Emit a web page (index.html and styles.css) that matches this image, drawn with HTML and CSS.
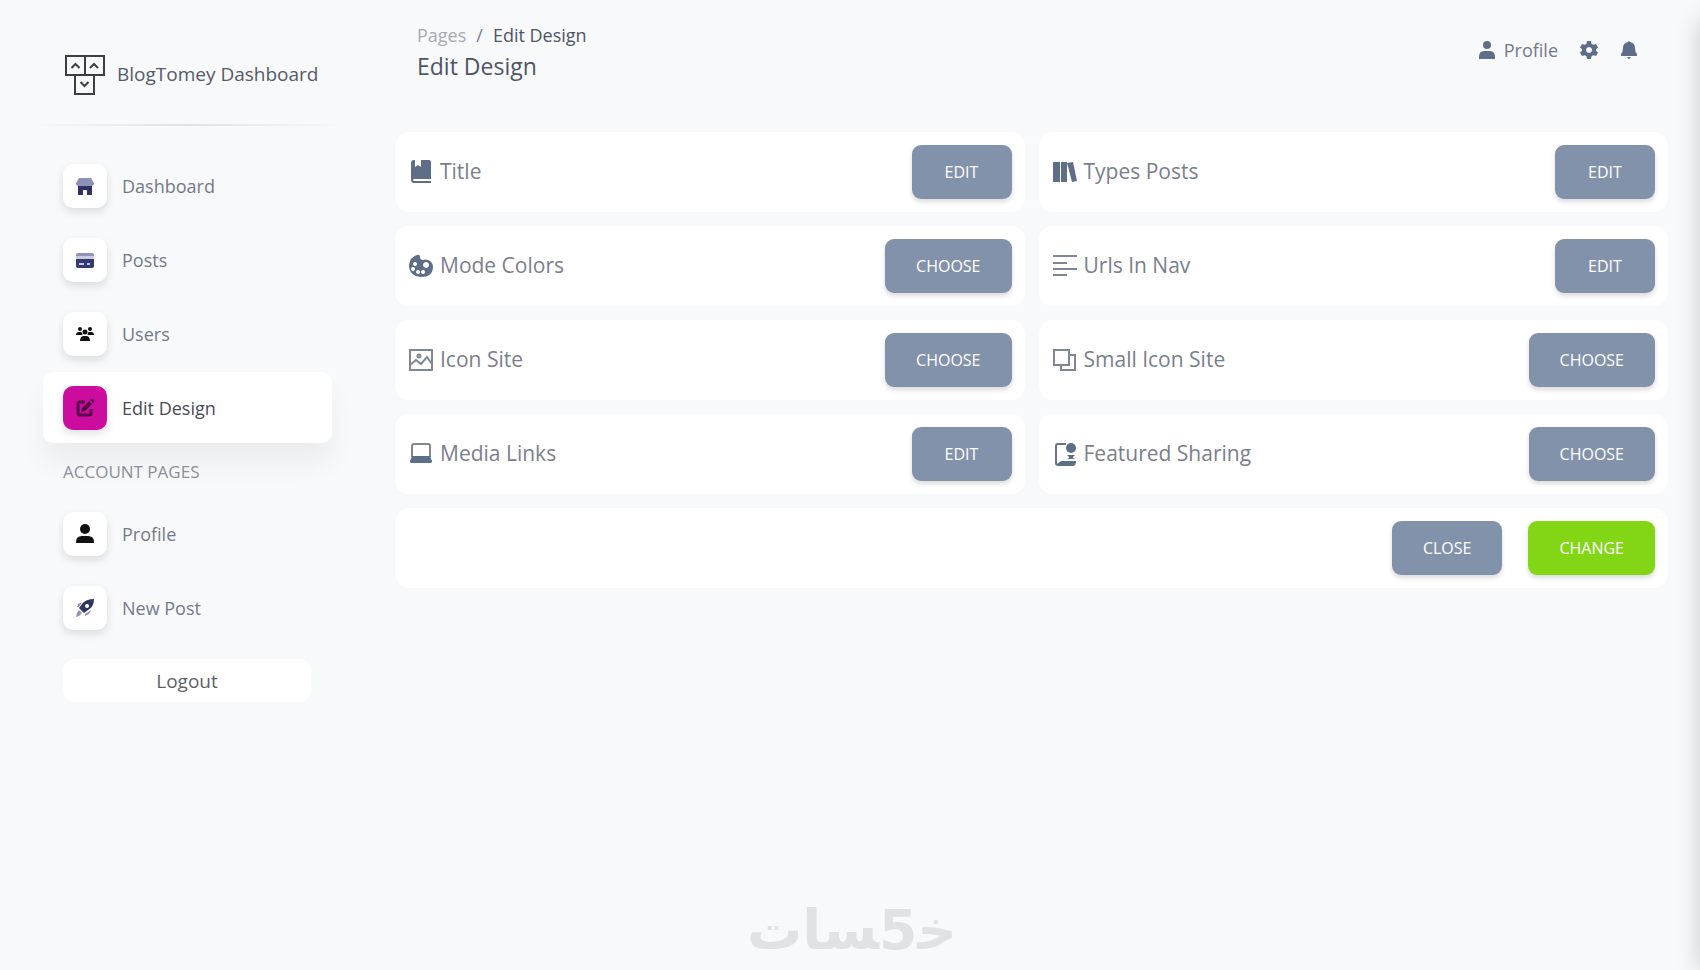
FILE: index.html
```html
<!DOCTYPE html>
<html lang="en">

<head>
    <meta charset="UTF-8">
    <meta name="viewport" content="width=device-width, initial-scale=1.0">
    <title>Edit Design</title>
    <link rel="stylesheet" href="styles.css">
</head>

<body>

    <!-- Side Menu -->
    <aside class="sidebar">
        <a class="brand" href="#">
            <svg class="brand-logo" viewBox="0 0 40 40" fill="none" stroke="#3c3f45" stroke-width="2">
                <rect x="1" y="1" width="19" height="19"/>
                <rect x="20" y="1" width="19" height="19"/>
                <rect x="10" y="20" width="19" height="19"/>
                <path d="M6.500 13l4-4 4 4M25 13l4-4 4 4M15.500 27l4 4 4-4"/>
            </svg>
            <span>BlogTomey Dashboard</span>
        </a>
        <hr class="divider">

        <nav class="side-nav">
            <a class="nav-item" href="#">
                <span class="icon-box">
                    <svg viewBox="0 0 18 18"><path fill="#8d91b8" d="M3 1h12l3 5c0 2-1 3-2 3H2C1 9 0 8 0 6z"/><path fill="#2f3160" d="M2 9h14v9h-5v-5H7v5H2z"/></svg>
                </span>
                Dashboard
            </a>
            <a class="nav-item" href="#">
                <span class="icon-box">
                    <svg viewBox="0 0 18 18"><path fill="#9094bd" d="M2 2h14q2 0 2 2v4H0V4q0-2 2-2z"/><path fill="#c9cbe2" d="M0 5h18v3H0z"/><path fill="#343a6b" d="M0 8h18v7q0 2-2 2H2q-2 0-2-2z"/><path fill="#c4c6dd" d="M3 12h5v2H3zM11 12h3v2h-3z"/></svg>
                </span>
                Posts
            </a>
            <a class="nav-item" href="#">
                <span class="icon-box">
                    <svg viewBox="0 0 18 18" fill="#111"><circle cx="4" cy="4" r="2"/><circle cx="14" cy="4" r="2"/><circle cx="9" cy="7" r="2.500"/><path d="M0 10q0-3 3-3h2q1 0 1 1 0 2 1 2zM18 10q0-3-3-3h-2q-1 0-1 1 0 2-1 2zM4 16q0-5 4-5h2q4 0 4 5z"/></svg>
                </span>
                Users
            </a>
            <a class="nav-item active" href="#">
                <span class="icon-box">
                    <svg viewBox="0 0 18 18" fill="none" stroke="#560548" stroke-width="3"><path d="M9 3H4Q2 3 2 5v9q0 2 2 2h9q2 0 2-2v-4"/><path fill="#560548" stroke="none" d="M5 13l1-4 7-7 3 3-7 7zM14 1l1-1q1-1 2 0l1 1q1 1 0 2l-1 1z"/></svg>
                </span>
                Edit Design
            </a>
        </nav>

        <h6 class="nav-heading">Account pages</h6>

        <nav class="side-nav">
            <a class="nav-item" href="#">
                <span class="icon-box">
                    <svg viewBox="0 0 18 18" fill="#111"><circle cx="9" cy="4" r="5"/><path d="M0 18v-1q0-6 6-6h6q6 0 6 6v1z"/></svg>
                </span>
                Profile
            </a>
            <a class="nav-item" href="#">
                <span class="icon-box">
                    <svg viewBox="0 0 18 18"><path fill="#2f365f" fill-rule="evenodd" d="M18 0q0 8-6 11l-4 3-5-5 3-4Q10 0 18 0zM11 5a2 2 0 1 0 .1 0z"/><path fill="#8f93b5" d="M6 3L2 5 1 8h2zM15 11l-2 4-4 2v-2zM3 11l3 3-3 3-3 1 1-4z"/></svg>
                </span>
                New Post
            </a>
        </nav>

        <button class="logout" type="button">Logout</button>
    </aside>

    <!-- Content -->
    <main class="content">
        <header class="topbar">
            <div>
                <nav class="breadcrumb">
                    <a href="#">Pages</a>
                    <span>/</span>
                    <span class="current">Edit Design</span>
                </nav>
                <h1>Edit Design</h1>
            </div>
            <div class="top-links">
                <a href="#">
                    <svg class="icon-sm" viewBox="0 0 18 18"><circle cx="9" cy="4" r="4"/><path d="M1 18v-2q0-6 5-6h6q5 0 5 6v2z"/></svg>
                    Profile
                </a>
                <a href="#" aria-label="Settings">
                    <svg class="icon-sm" viewBox="0 0 18 18"><path fill-rule="evenodd" d="M7 0h4l.5 2.700 1.800 1L16 3l2 3.500-2 1.700v1.600l2 1.700-2 3.500-2.700-.700-1.800 1L11 18H7l-.5-2.700-1.800-1L2 15l-2-3.500 2-1.700V8.200L0 6.500 2 3l2.700.7 1.800-1zM9 6a3 3 0 1 0 .1 0z"/></svg>
                </a>
                <a href="#" aria-label="Notifications">
                    <svg class="icon-sm" viewBox="0 0 18 18"><path d="M8 1q1-2 2 0 5 1 5 6 0 4 2 6v2H1v-2q2-2 2-6 0-5 5-6zM7 16h4q-2 4-4 0z"/></svg>
                </a>
            </div>
        </header>

        <section class="cards">
            <div class="card">
                <svg class="icon" viewBox="0 0 24 24"><path d="M5 0h1v7l3-2 3 2V0h8q2 0 2 2v17H5q-1 0-1 1t1 1h17v2H5q-3 0-3-3V3q0-3 3-3z"/></svg>
                <h2>Title</h2>
                <button class="btn" type="button">Edit</button>
            </div>
            <div class="card">
                <svg class="icon" viewBox="0 0 24 24"><path d="M0 2h7v20H0zM8 2h6v20H8zM14 3l6-1 4 19-5 1z"/><path fill="#fff" d="M7 2h1v20H7zM14 7l1 0 3 15h-4z"/></svg>
                <h2>Types Posts</h2>
                <button class="btn" type="button">Edit</button>
            </div>
            <div class="card">
                <svg class="icon" viewBox="0 0 24 24"><path fill-rule="evenodd" d="M8 1q3-1 3 2 0 3 3 3 2-1 5 0 5 2 5 7 0 10-12 10Q0 22 0 11 1 3 8 1zM6 8a2 2 0 1 0 .1 0zM4 13a2 2 0 1 0 .1 0zM9 16a2 2 0 1 0 .1 0zM14 16a2 2 0 1 0 .1 0zM17 8a3 3 0 1 0 .1 0z"/></svg>
                <h2>Mode Colors</h2>
                <button class="btn" type="button">Choose</button>
            </div>
            <div class="card">
                <svg class="icon line" viewBox="0 0 24 24"><path d="M0 2h24M0 9h14M0 15h24M0 21h14"/></svg>
                <h2>Urls In Nav</h2>
                <button class="btn" type="button">Edit</button>
            </div>
            <div class="card">
                <svg class="icon line" viewBox="0 0 24 24"><rect x="1" y="2" width="22" height="20"/><path d="M1 17l6-5 5 4 6-7 5 7"/><circle cx="10" cy="8" r="1.500"/></svg>
                <h2>Icon Site</h2>
                <button class="btn" type="button">Choose</button>
            </div>
            <div class="card">
                <svg class="icon line" viewBox="0 0 24 24"><rect x="1" y="2" width="15" height="15"/><path d="M16 7h6v15H8v-5"/></svg>
                <h2>Small Icon Site</h2>
                <button class="btn" type="button">Choose</button>
            </div>
            <div class="card">
                <svg class="icon" viewBox="0 0 24 24"><path fill="none" stroke="#7f8795" stroke-width="2" d="M3 15V4q0-2 2-2h14q2 0 2 2v11"/><path d="M3 14h18l2 5q0 2-1 2H2q-1 0-1-2z"/></svg>
                <h2>Media Links</h2>
                <button class="btn" type="button">Edit</button>
            </div>
            <div class="card">
                <svg class="icon" viewBox="0 0 24 24"><path fill="none" stroke="#67748e" stroke-width="2" d="M13 2H5Q3 2 3 4v17q0 2 2 2"/><circle cx="18" cy="6" r="5"/><path d="M14 13h8l-2 2v1l2 1h-8l2-1v-1zM4 22l4-3h15q0 5-3 5H5z"/></svg>
                <h2>Featured Sharing</h2>
                <button class="btn" type="button">Choose</button>
            </div>
            <div class="card card-actions">
                <button class="btn" type="button">Close</button>
                <button class="btn btn-success" type="button">Change</button>
            </div>
        </section>

        <footer class="watermark" lang="ar" dir="rtl">خ&zwj;5&zwj;سات</footer>
    </main>

    <!-- Settings panel, closed -->
    <div class="side-panel"></div>

</body>
</html>
```
FILE: styles.css
```css
/* General Styles */
* {
    box-sizing: border-box;
}

body {
    margin: 0;
    min-height: 100vh;
    display: flex;
    font-family: "Open Sans", sans-serif;
    font-size: 18px;
    line-height: 24px;
    color: #727a88;
    background-color: #f8f9fb;
    overflow-x: hidden;
}

a {
    color: inherit;
    text-decoration: none;
}

h1, h2, h6 {
    margin: 0;
    font-weight: 400;
}

button {
    font-family: inherit;
    border: none;
    cursor: pointer;
}

/* Side Menu */
.sidebar {
    flex: 0 0 352px;
    padding: 26px 20px 0 43px;
}

.brand {
    display: flex;
    align-items: center;
    gap: 12px;
    height: 98px;
    padding-left: 22px;
    color: #555b66;
    font-size: 19px;
    white-space: nowrap;
}

.brand span {
    padding-bottom: 3px;
}

.brand-logo {
    width: 40px;
    height: 40px;
}

.divider {
    height: 2px;
    margin: 0 -10px 24px;
    border: none;
    background: linear-gradient(90deg, transparent, #dfe1e4, transparent);
}

.side-nav {
    display: flex;
    flex-direction: column;
    gap: 3px;
}

.nav-item {
    display: flex;
    align-items: center;
    gap: 15px;
    height: 71px;
    padding-left: 20px;
    border-radius: 10px;
}

.nav-item.active {
    color: #454b58;
    background-color: #fff;
    box-shadow: 0 20px 27px rgba(0, 0, 0, 0.05);
}

.icon-box {
    display: flex;
    align-items: center;
    justify-content: center;
    width: 44px;
    height: 44px;
    border-radius: 10px;
    background-color: #fff;
    box-shadow: 0 4px 8px rgba(20, 20, 20, 0.12);
}

.icon-box svg {
    width: 18px;
    height: 18px;
    overflow: visible;
}

.active .icon-box {
    background-color: #cb0c9f;
}

.nav-heading {
    padding: 17px 20px 14px;
    font-size: 17px;
    color: #8b8f97;
    text-transform: uppercase;
}

.logout {
    display: block;
    width: 248px;
    height: 43px;
    margin: 16px 20px;
    border-radius: 12px;
    background-color: #fff;
    color: #5c616b;
    font-size: 19px;
}

/* Content */
.content {
    flex: 1;
    display: flex;
    flex-direction: column;
    padding: 23px 32px 8px 43px;
}

.topbar {
    display: flex;
    justify-content: space-between;
    padding: 0 30px 0 22px;
    height: 109px;
}

.breadcrumb {
    display: flex;
    gap: 10px;
    color: #777d88;
}

.breadcrumb a {
    color: #a6aab2;
}

.breadcrumb .current {
    color: #4e5563;
}

.topbar h1 {
    margin-top: 5px;
    font-size: 23px;
    line-height: 28px;
    color: #4e5563;
}

.top-links {
    display: flex;
    gap: 22px;
    height: 54px;
    align-items: center;
}

.top-links a {
    display: flex;
    align-items: center;
    gap: 8px;
}

.icon-sm {
    width: 18px;
    height: 18px;
    fill: #5f6e88;
}

/* Cards */
.cards {
    display: grid;
    grid-template-columns: 1fr 1fr;
    gap: 14px;
}

.card {
    display: flex;
    align-items: center;
    gap: 7px;
    padding: 13px;
    padding-left: 14px;
    border-radius: 14px;
    background-color: #fff;
}

.card h2 {
    flex: 1;
    padding-bottom: 2px;
    font-size: 21px;
    line-height: 28px;
    color: #7a808b;
}

.card-actions {
    grid-column: span 2;
    justify-content: flex-end;
    gap: 26px;
}

.icon {
    width: 24px;
    height: 24px;
    fill: #5f6e88;
}

.icon.line {
    fill: none;
    stroke: #7f8795;
    stroke-width: 2;
}

.btn {
    min-width: 100px;
    height: 54px;
    padding: 0 31px;
    border-radius: 9px;
    background-color: #8392ab;
    color: #fff;
    font-size: 16px;
    text-transform: uppercase;
    box-shadow: 0 3px 5px rgba(0, 0, 0, 0.14);
}

.btn-success {
    background-color: #82d616;
}

/* Watermark */
.watermark {
    margin-top: auto;
    align-self: flex-start;
    margin-left: 352px;
    font-family: "DejaVu Sans", sans-serif;
    font-size: 55px;
    line-height: 64px;
    font-weight: bold;
    color: #e1e2e4;
}

/* Settings panel waiting past the right edge */
.side-panel {
    position: fixed;
    top: 20px;
    right: -20px;
    bottom: 0;
    width: 20px;
    box-shadow: 0 0 24px rgba(0, 0, 0, 0.2);
}
```
